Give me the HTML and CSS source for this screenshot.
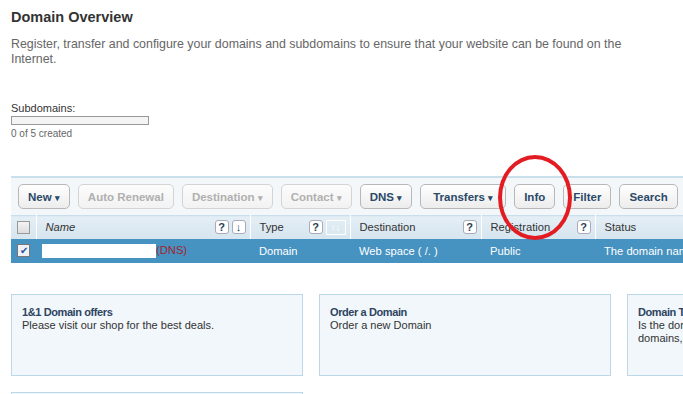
FILE: index.html
```html
<!DOCTYPE html>
<html lang="en">
<head>
    <meta charset="UTF-8">
    <title>Domain Overview</title>
    <link rel="stylesheet" href="styles.css">
</head>
<body>
    <div class="page">
        <h1>Domain Overview</h1>
        <p class="intro">Register, transfer and configure your domains and subdomains to ensure that your website can be found on the Internet.</p>

        <div class="quota">
            <div class="quota-label">Subdomains:</div>
            <div class="quota-bar"></div>
            <div class="quota-note">0 of 5 created</div>
        </div>

        <div class="toolbar">
            <button class="btn">New <span class="caret">&#9662;</span></button>
            <button class="btn disabled">Auto Renewal</button>
            <button class="btn disabled">Destination <span class="caret">&#9662;</span></button>
            <button class="btn disabled">Contact <span class="caret">&#9662;</span></button>
            <button class="btn">DNS <span class="caret">&#9662;</span></button>
            <button class="btn wide">Transfers <span class="caret">&#9662;</span></button>
            <button class="btn">Info</button>
            <button class="btn">Filter</button>
            <button class="btn">Search</button>
        </div>

        <table class="grid">
            <thead>
                <tr>
                    <th class="col-check"><span class="check"></span></th>
                    <th class="col-name"><div class="th-in"><em>Name</em><span class="icons"><span class="help">?</span><span class="sort">&#8595;</span></span></div></th>
                    <th class="col-type"><div class="th-in">Type<span class="icons"><span class="help">?</span><span class="sort-off">&#8593;&#8595;</span></span></div></th>
                    <th class="col-dest"><div class="th-in">Destination<span class="icons"><span class="help">?</span></span></div></th>
                    <th class="col-reg"><div class="th-in">Registration<span class="icons"><span class="help">?</span></span></div></th>
                    <th class="col-status"><div class="th-in">Status</div></th>
                </tr>
            </thead>
            <tbody>
                <tr class="selected">
                    <td><span class="check checked">&#10004;</span></td>
                    <td><span class="hidden-name"></span><span class="dns">(DNS)</span></td>
                    <td>Domain</td>
                    <td>Web space ( /. )</td>
                    <td>Public</td>
                    <td class="clip">The domain name is active</td>
                </tr>
            </tbody>
        </table>

        <div class="cards">
            <div class="card">
                <h3>1&amp;1 Domain offers</h3>
                <p>Please visit our shop for the best deals.</p>
            </div>
            <div class="card">
                <h3>Order a Domain</h3>
                <p>Order a new Domain</p>
            </div>
            <div class="card">
                <h3>Domain Transfer</h3>
                <p>Is the domain with another provider? Move your<br>domains, <a href="#">here</a></p>
            </div>
            <div class="card short"></div>
        </div>

        <div class="mark"></div>
    </div>
</body>
</html>
```

FILE: styles.css
```css
body {
    margin: 0;
    font-family: "Liberation Sans", Arial, sans-serif;
    background: #fff;
    color: #333;
    overflow: hidden;
}
.page {
    position: relative;
    padding: 9px 0 0 11px;
    width: 800px;
}
h1 {
    margin: 0;
    font-size: 14.5px;
    font-weight: bold;
    color: #333;
}
.intro {
    margin: 12px 0 0;
    width: 630px;
    font-size: 12.4px;
    line-height: 15px;
    color: #666;
}
.quota {
    margin-top: 35px;
}
.quota-label {
    font-size: 11px;
    color: #333;
}
.quota-bar {
    width: 136px;
    height: 7px;
    margin-top: 2px;
    border: 1px solid #999;
    background: #f4f4f4;
}
.quota-note {
    margin-top: 3px;
    font-size: 10px;
    color: #666;
}
.toolbar {
    display: flex;
    gap: 8px;
    margin-top: 37px;
    padding: 6px 0 6px 7px;
    border-top: 2px solid #c9e0ec;
    background: #f3f7fa;
}
.btn {
    flex: none;
    height: 25px;
    padding: 0 9px;
    font-family: inherit;
    font-size: 11.5px;
    font-weight: bold;
    color: #2b4968;
    background: linear-gradient(#ffffff, #ececec);
    border: 1px solid #b8b8b8;
    border-radius: 5px;
}
.btn.wide {
    padding: 0 12px;
}
.btn.disabled {
    color: #b0b0b0;
    border-color: #d4d4d4;
    background: linear-gradient(#fcfcfc, #f2f2f2);
}
.caret {
    font-size: 9px;
}
.grid {
    border-collapse: collapse;
    table-layout: fixed;
    width: 784px;
    font-size: 11.2px;
    border-top: 1px solid #c9e0ec;
}
.grid th, .grid td {
    box-sizing: border-box;
}
.grid th {
    height: 23px;
    padding: 0 4px 0 9px;
    text-align: left;
    font-weight: normal;
    color: #333;
    background: linear-gradient(#e4eef5, #d6e5ef);
    border-left: 1px solid #fff;
}
.grid th:first-child {
    border-left: none;
}
.th-in {
    display: flex;
    align-items: center;
}
.th-in em {
    color: #333;
}
.icons {
    margin-left: auto;
    display: flex;
    gap: 3px;
}
.help, .sort {
    width: 12px;
    height: 12px;
    border: 1px solid #aab;
    border-radius: 3px;
    background: #fff;
    font-size: 11px;
    font-weight: bold;
    line-height: 12px;
    text-align: center;
    color: #2b3f55;
}
.sort-off {
    width: 18px;
    height: 13px;
    border: 1px solid #fff;
    font-size: 10px;
    line-height: 13px;
    text-align: center;
    color: #fff;
}
.col-check { width: 25px; }
.col-name { width: 214px; }
.col-type { width: 100px; }
.col-dest { width: 131px; }
.col-reg { width: 114px; }
.col-status { width: 200px; }
.grid th.col-check {
    padding: 0 0 0 6px;
}
.check {
    display: block;
    width: 11px;
    height: 11px;
    border: 1px solid #999;
    background: linear-gradient(#f4f4f4, #ddd);
    font-size: 10px;
    line-height: 11px;
    text-align: center;
    color: #2d4f9a;
}
.check.checked {
    background: #eef2f6;
    border-color: #777;
}
.selected td {
    height: 24px;
    padding: 0 8px 0 9px;
    background: #4692c0;
    color: #fff;
    white-space: nowrap;
}
.selected td:first-child {
    padding: 0 0 0 6px;
}
.selected td:nth-child(2) {
    padding-left: 6px;
}
.hidden-name {
    display: inline-block;
    vertical-align: middle;
    width: 114px;
    height: 14px;
    background: #fff;
}
.dns {
    vertical-align: middle;
    color: #a3242e;
}
.clip {
    overflow: hidden;
}
.cards {
    display: grid;
    grid-template-columns: 292px 292px 292px;
    gap: 16px;
    margin-top: 31px;
}
.card {
    height: 69px;
    padding: 11px 10px 0;
    background: #f1f7fb;
    border: 1px solid #bcd8e8;
    font-size: 11px;
    color: #333;
}
.card h3 {
    margin: 0;
    font-size: 11px;
    letter-spacing: -0.4px;
    font-weight: bold;
    color: #2e4461;
}
.card p {
    margin: 1px 0 0;
    line-height: 13px;
}
.card a {
    color: #e8903a;
    text-decoration: none;
}
.card.short {
    height: 20px;
}
.mark {
    position: absolute;
    left: 498px;
    top: 155px;
    width: 66px;
    height: 77px;
    border: 4px solid #e31c23;
    border-radius: 50%;
}
```
